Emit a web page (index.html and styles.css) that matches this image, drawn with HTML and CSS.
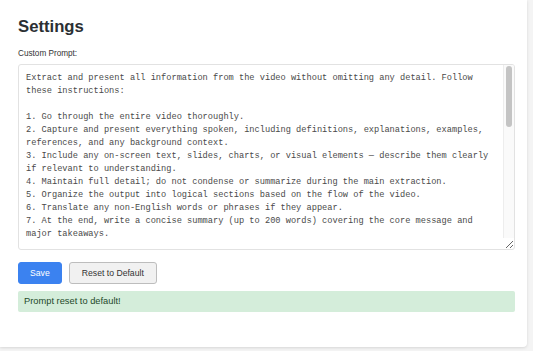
FILE: index.html
```html
<!DOCTYPE html>
<html lang="en">
<head>
<meta charset="utf-8">
<title>Settings</title>
<link rel="stylesheet" href="styles.css">
</head>
<body>
<div class="card">
  <h1 class="title">Settings</h1>
  <label class="label" for="prompt">Custom Prompt:</label>
  <div class="field">
    <textarea id="prompt" class="prompt" spellcheck="false">Extract and present all information from the video without omitting any detail. Follow these instructions:

1. Go through the entire video thoroughly.
2. Capture and present everything spoken, including definitions, explanations, examples, references, and any background context.
3. Include any on-screen text, slides, charts, or visual elements — describe them clearly if relevant to understanding.
4. Maintain full detail; do not condense or summarize during the main extraction.
5. Organize the output into logical sections based on the flow of the video.
6. Translate any non-English words or phrases if they appear.
7. At the end, write a concise summary (up to 200 words) covering the core message and major takeaways.

Formatting guidelines:
- Use clear headings for each section.
- Use bullet points for lists of facts, steps, or examples.
- Quote important statements verbatim where possible.
- Include timestamps if they are available.
- Keep the original order of topics.
- Highlight key terms and names.

Do not add opinions or information that is not in the video.</textarea>
    <div class="scrollbar" aria-hidden="true"><div class="scroll-thumb"></div></div>
  </div>
  <div class="actions">
    <button class="btn btn-primary" type="button">Save</button>
    <button class="btn btn-secondary" type="button">Reset to Default</button>
  </div>
  <div class="status">Prompt reset to default!</div>
</div>
</body>
</html>
```

FILE: styles.css
```css
html, body {
  margin: 0;
  padding: 0;
}

body {
  background: #f4f4f4;
  font-family: "Liberation Sans", Arial, sans-serif;
  color: #333;
  width: 533px;
  height: 351px;
  overflow: hidden;
}

.card {
  box-sizing: border-box;
  width: 527px;
  height: 347px;
  background: #fff;
  border-radius: 0 0 4px 0;
  box-shadow: 0 1px 3px rgba(0, 0, 0, 0.12);
  padding: 17px 12px 0 18px;
}

.title {
  margin: 0;
  font-size: 16.7px;
  line-height: 20px;
  font-weight: bold;
  color: #2b2f33;
}

.label {
  display: block;
  margin-top: 10px;
  font-size: 8.2px;
  line-height: 13px;
  color: #333;
}

.field {
  position: relative;
  margin-top: 4px;
}

.prompt {
  display: block;
  box-sizing: border-box;
  width: 100%;
  height: 186px;
  margin: 0;
  padding: 7px 18px 7px 7px;
  border: 1px solid #e2e2e2;
  border-radius: 3px;
  font-family: "Liberation Mono", "Courier New", monospace;
  font-size: 8.67px;
  line-height: 13px;
  color: #4a4a4a;
  background: #fff;
  resize: vertical;
  overflow: hidden;
  outline: none;
}

.scrollbar {
  position: absolute;
  top: 1px;
  right: 1px;
  width: 10px;
  height: 173px;
  background: #fafafa;
  border-left: 1px solid #ededed;
  border-radius: 0 2px 0 0;
}

.scroll-thumb {
  margin: 1px 0 0 2px;
  width: 6px;
  height: 61px;
  background: #c4c4c4;
  border-radius: 3px;
}

.actions {
  display: flex;
  gap: 7px;
  margin-top: 12px;
}

.btn {
  box-sizing: border-box;
  height: 22px;
  padding: 0 11px;
  border-radius: 3px;
  font-family: "Liberation Sans", Arial, sans-serif;
  font-size: 8.67px;
  cursor: pointer;
}

.btn-primary {
  background: #3b82f0;
  border: 1px solid #3b82f0;
  color: #fff;
}

.btn-secondary {
  background: #f1f1f1;
  border: 1px solid #bdbdbd;
  color: #333;
  padding: 0 12px;
}

.status {
  margin-top: 7px;
  height: 21px;
  line-height: 21px;
  padding: 0 6px;
  background: #d4edda;
  border-radius: 2px;
  color: #1f4a2a;
  font-size: 9.3px;
}
```
